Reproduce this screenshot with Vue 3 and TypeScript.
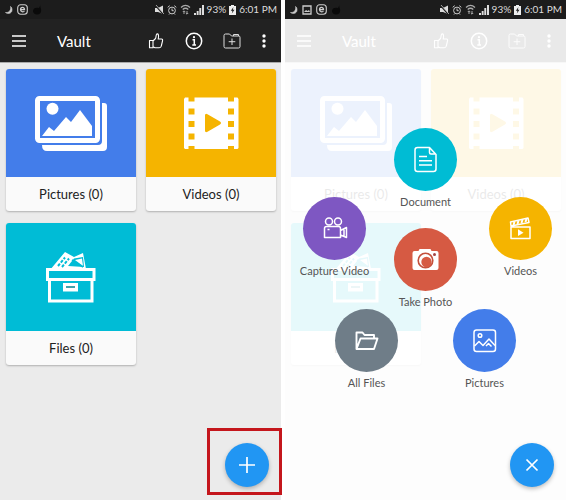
<script setup lang="ts">
type CardIcon = 'pictures' | 'videos' | 'files'
type ActionIcon = 'document' | 'capture' | 'clapper' | 'camera' | 'folder' | 'image'

interface Card {
  label: string
  count: number
  icon: CardIcon
}

interface Action {
  label: string
  icon: ActionIcon
  dx: number
  y: number
}

interface Screen {
  id: string
  menuOpen: boolean
}

const screens: Screen[] = [
  { id: 'home', menuOpen: false },
  { id: 'add', menuOpen: true },
]

const cards: Card[] = [
  { label: 'Pictures', count: 0, icon: 'pictures' },
  { label: 'Videos', count: 0, icon: 'videos' },
  { label: 'Files', count: 0, icon: 'files' },
]

// dx: distance of the circle's centre from the middle of the screen; y: from the overlay's top
const actions: Action[] = [
  { label: 'Document', icon: 'document', dx: 0, y: 140 },
  { label: 'Capture Video', icon: 'capture', dx: -91, y: 209 },
  { label: 'Videos', icon: 'clapper', dx: 95, y: 209 },
  { label: 'Take Photo', icon: 'camera', dx: 0, y: 240 },
  { label: 'All Files', icon: 'folder', dx: -59, y: 321 },
  { label: 'Pictures', icon: 'image', dx: 59, y: 321 },
]
</script>

<template>
  <main class="screens">
    <section v-for="screen in screens" :key="screen.id" class="phone">
      <div class="status">
        <div class="status-group notices">
          <svg width="9" height="10" viewBox="0 0 9 10"><path d="M6.5 1.5C7.5 5 5 8 1.5 7.5C4 9.5 8 8.500 8 5C8 3 7.5 2 6.5 1.5Z" fill="#ccc" stroke="#ccc" stroke-width=".6" /></svg>
          <svg v-if="screen.menuOpen" width="10" height="10" viewBox="0 0 10 10">
            <path d="M1 1H9V9H1Z" fill="none" stroke="#ccc" stroke-width="1.3" />
            <path d="M2 7L4 5L5.5 6L7 5L8 7Z" fill="#ccc" />
          </svg>
          <svg width="11" height="11" viewBox="0 0 11 11" fill="none" stroke="#ccc">
            <rect x=".7" y=".7" width="9.6" height="9.6" rx="3" stroke-width="1.1" />
            <path d="M3.5 5.6H7.5C7.5 2.5 3.5 2.5 3.5 5.6C3.5 8 6.5 8.3 7.4 7" stroke-width="1.3" />
          </svg>
          <svg width="11" height="13" viewBox="0 0 11 13"><path d="M9 1C7 4 10 5 9 9C7 13 1 12 1 8C1 5 4 4 7 5Z" fill="#0a0a0a" /></svg>
        </div>
        <div class="status-group">
          <svg width="9" height="10" viewBox="0 0 9 10">
            <path d="M0 3H3L8 .5V9L3 7H0Z" fill="#ddd" />
            <path d="M0 0L9 10" stroke="#1c1c1c" stroke-width="1.5" />
            <path d="M1 0L9 9" stroke="#ddd" stroke-width=".7" />
          </svg>
          <svg width="10" height="10" viewBox="0 0 10 10" fill="none" stroke="#ccc">
            <circle cx="5" cy="5.5" r="3.4" /><path d="M5 3.5V5.700H6.7M.7 2.3L2.7 .7M9.3 2.3L7.3 .7M2 9.5L3 8.5M8 9.5L7 8.5" />
          </svg>
          <svg width="11" height="11" viewBox="0 0 11 11" fill="none" stroke="#aaa">
            <path d="M1 3.5Q5.5 -.7 10 3.5M2.7 5.5Q5.5 3 8.3 5.5" stroke-width="1.3" />
            <path d="M4 10V7M7 10V7M2.8 8L4 6.8L5.2 8M5.8 9L7 10.2L8.2 9" />
          </svg>
          <svg width="10" height="10" viewBox="0 0 10 10" fill="#ddd">
            <path d="M0 10V8H2V10ZM2.7 10V6H4.6V10ZM5.3 10V3H7.2V10ZM8 10V0H10V10Z" />
          </svg>
          <span>93%</span>
          <svg width="7" height="10" viewBox="0 0 7 10">
            <path d="M2 0H5V1H7V10H0V1H2Z" fill="#eee" /><path d="M4.5 2L1.8 5.7H3.5L2.8 8.5L5.5 4.7H3.8Z" fill="#1c1c1c" />
          </svg>
          <span>6:01 PM</span>
        </div>
      </div>

      <div class="body">
        <div class="app" :inert="screen.menuOpen">
          <header class="toolbar">
            <button class="icon-button" aria-label="Menu">
              <svg width="16" height="16" viewBox="0 0 16 16"><path d="M1 3H15M1 8H15M1 13H15" stroke="#fff" stroke-width="1.7" /></svg>
            </button>
            <h1>Vault</h1>
            <div class="tools">
              <button class="icon-button" aria-label="Like">
                <svg width="18" height="18" viewBox="0 0 18 18" fill="none" stroke="#fff" stroke-width="1.1" stroke-linejoin="round">
                  <path d="M2.5 8.5H6V15.7H2.500ZM6 9L8.5 6.5C9.3 5 8.8 3 9.700 2C11.5 1.5 12 3.5 11.2 7H14.5Q16 7.2 15.5 9L14.3 14Q14 15.7 12.3 15.7H8L6 14.8" />
                </svg>
              </button>
              <button class="icon-button" aria-label="Information">
                <svg width="18" height="18" viewBox="0 0 18 18">
                  <circle cx="9" cy="9" r="7.7" fill="none" stroke="#fff" stroke-width="1.5" />
                  <circle cx="9" cy="5.2" r="1.1" fill="#fff" /><path d="M7.5 7.7H9.3V12.7M7.3 13H11" fill="none" stroke="#fff" stroke-width="1.5" />
                </svg>
              </button>
              <button class="icon-button" aria-label="New folder">
                <svg width="18" height="18" viewBox="0 0 18 18" fill="none" stroke="#ddd" stroke-width="1">
                  <path d="M1 14.5V3.5Q1 2 2.5 2H6.5L8.5 4H16Q17 4 17 5.5V14.5Q17 16 15.5 16H2.5Q1 16 1 14.5ZM10.5 4V2.5H15.5V4M9 6.5V13M5.7 9.7H12.3" />
                </svg>
              </button>
              <button class="icon-button" aria-label="More">
                <svg width="6" height="18" viewBox="0 0 6 18" fill="#fff"><circle cx="3" cy="4" r="1.7" /><circle cx="3" cy="9" r="1.7" /><circle cx="3" cy="14" r="1.7" /></svg>
              </button>
            </div>
          </header>

          <div class="cards">
            <button v-for="card in cards" :key="card.label" class="card">
              <span class="cover" :class="card.icon">
                <svg v-if="card.icon === 'pictures'" width="74" height="58" viewBox="34 94 74 58">
                  <rect x="37.5" y="98.5" width="60" height="42" rx="2" fill="none" stroke="#fff" stroke-width="5" />
                  <circle cx="52.5" cy="108.7" r="6" fill="#fff" />
                  <path d="M42 136L49 127L54 131L66 117L71 122L80 110L92 126V136Z" fill="#fff" />
                  <path d="M102 103H104Q107 103 107 106V147Q107 151 103 151H47Q42 151 42 145H98Q102 145 102 141Z" fill="#fff" />
                </svg>
                <svg v-else-if="card.icon === 'videos'" width="56" height="54" viewBox="183 96 56 54">
                  <path fill="#fff" fill-rule="evenodd" d="M185 97.5H188.5V101.5H194.5V97.5H228V101.5H234V97.5H237.5L238.5 99V148L237.5 149H234V146H228V149H194.5V146H188.5V149H185L184 148V99ZM188.5 108.5V114.5H194.5V108.5ZM188.5 121V127H194.5V121ZM188.5 133.5V139.5H194.5V133.5ZM228 108.5V114.5H234V108.5ZM228 121V127H234V121ZM228 133.5V139.5H234V133.5ZM205 115.5V130.5Q205 133 207.5 131.8L220 124.5Q222 123 220 121.5L207.5 114.3Q205 113 205 115.5Z" />
                </svg>
                <svg v-else width="52" height="54" viewBox="45 250 52 54">
                  <path d="M50 270L65 252L74 257L83 253L86 269V270Z" fill="#fff" />
                  <path d="M68 266L74 258.500L83 257L84 267Z" fill="#00bcd6" />
                  <path d="M75 260L82 258.5L83 266Z" fill="#fff" />
                  <path d="M72 260L83 267" stroke="#00bcd6" stroke-width="1.5" />
                  <path d="M58 266L65 257.500M62 267L69 258.5" stroke="#00bcd6" stroke-width="2" stroke-dasharray="3 1.5" />
                  <rect x="47.5" y="269.5" width="46.5" height="10" fill="#00bcd6" stroke="#fff" stroke-width="3" />
                  <path d="M49.5 280V301H92V280" fill="none" stroke="#fff" stroke-width="3" />
                  <path d="M63 283H78V291.5H63Z" fill="#fff" /><path d="M66 287H75" stroke="#00838f" stroke-width="1.5" />
                </svg>
              </span>
              <span class="card-label">{{ card.label }} ({{ card.count }})</span>
            </button>
          </div>
        </div>

        <nav v-if="screen.menuOpen" class="overlay" aria-label="Add">
          <button
            v-for="action in actions"
            :key="action.label"
            class="action"
            :style="{ left: `calc(50% + ${action.dx}px)`, top: `${action.y}px` }"
          >
            <span class="disc" :class="action.icon">
              <svg width="33" height="33" viewBox="-16.5 -16.5 33 33" fill="none" stroke="#fff" stroke-width="1.5" stroke-linejoin="round">
                <template v-if="action.icon === 'document'">
                  <path d="M-8 -12H4L10.5 -5V9.5Q10.5 12 8 12H-8Q-10.5 12 -10.5 9.5V-9.5Q-10.5 -12 -8 -12ZM4 -12V-7Q4 -5.5 5.5 -5.5H10.5" />
                  <path d="M-6.5 -3H1.5M-6.5 1.2H6.5M-6.5 5.5H6.5" />
                </template>
                <template v-else-if="action.icon === 'capture'">
                  <circle cx="-5.5" cy="-7" r="3.5" /><circle cx="3.5" cy="-7" r="3.5" />
                  <path d="M-10 0Q-10 -2 -8 -2H4Q6 -2 6 0V2L12 -1V9L6 6.5V9H-10ZM6 2V6.5M9.5 .5V8M-7 1H-5" />
                </template>
                <template v-else-if="action.icon === 'clapper'">
                  <path d="M-9.5 -1.5H9.5V10H-9.5ZM-9.5 -2.5L-10 -6.5L7.5 -10.5L8.5 -6Z" />
                  <path d="M-6 -7L-7 -3.5M-2 -8L-3 -4.5M2 -9L1 -5.5M6 -10L5 -6.5" stroke-width="2" />
                  <path d="M-2.5 .8V7.5L3 4.2Z" fill="#fff" stroke="none" />
                </template>
                <template v-else-if="action.icon === 'camera'">
                  <path d="M-11 -8.5H-7L-6 -10.5H5L6 -8.5H11Q13 -8.5 13 -6.5V8.5Q13 10.5 11 10.5H-11Q-13 10.5 -13 8.5V-6.5Q-13 -8.5 -11 -8.5Z" fill="#fff" stroke="none" />
                  <circle cx="0" cy="1" r="7.3" stroke="#c4503c" stroke-width="1.6" />
                  <circle cx="1" cy="2.5" r="5.2" fill="#d65a43" stroke="none" />
                  <circle cx="9" cy="-5" r="1.5" fill="#a34444" stroke="none" />
                </template>
                <template v-else-if="action.icon === 'folder'">
                  <path d="M-10 8.5V-8H-4L-2 -5.5H7.5V-2M-10 8.5L-6 -2H11L7.5 8.5Z" stroke-width="1.9" />
                </template>
                <template v-else>
                  <rect x="-10.5" y="-10.5" width="21.5" height="21.5" rx="2.5" />
                  <circle cx="-4.5" cy="-5" r="1.8" />
                  <path d="M-10 5.5L-5.5 1L-1.5 5L4.5 -1.5L10.5 5M1.5 5.5L4 3L7 6" />
                </template>
              </svg>
            </span>
            <span class="action-label">{{ action.label }}</span>
          </button>
        </nav>

        <div class="fab-area">
          <span v-if="!screen.menuOpen" class="highlight"></span>
          <button class="fab" :aria-label="screen.menuOpen ? 'Close' : 'Add'">
            <svg width="18" height="18" viewBox="0 0 18 18" fill="none" stroke="#fff" stroke-width="1.7">
              <path :d="screen.menuOpen ? 'M3.5 3.5L14.5 14.5M14.5 3.5L3.5 14.5' : 'M9 1V17M1 9H17'" />
            </svg>
          </button>
        </div>
      </div>
    </section>
  </main>
</template>

<style>
body {
  background: #fff;
}
</style>

<style scoped>
.screens {
  display: grid;
  grid-template-columns: 1fr 1fr;
  gap: 4px;
  padding-right: 1px;
  min-height: 100vh;
  box-sizing: border-box;
  font-family: Lato, "Open Sans", sans-serif;
  color: #222;
}

.phone {
  display: flex;
  flex-direction: column;
  min-width: 0;
}

.status {
  display: flex;
  justify-content: space-between;
  align-items: center;
  height: 19px;
  padding: 0 4px;
  background: #1c1c1c;
  color: #ddd;
  font-size: 10px;
  line-height: 19px;
  white-space: nowrap;
}

.status-group {
  display: flex;
  align-items: center;
  gap: 3px;
}

.notices {
  gap: 4px;
}

.body {
  position: relative;
  display: flex;
  flex: 1;
}

.app {
  flex: 1;
  min-width: 0;
  background: #ebebeb;
}

button {
  padding: 0;
  border: 0;
  background: none;
  color: inherit;
  font: inherit;
  cursor: pointer;
}

svg {
  display: block;
  flex: none;
}

.toolbar {
  display: flex;
  align-items: center;
  height: 43px;
  padding: 0 14px 0 11px;
  background: #222;
  color: #fff;
  border-bottom: 1px solid #aaa;
}

h1 {
  margin: 0 0 0 30px;
  font-size: 15px;
  font-weight: 400;
  line-height: 20px;
}

.tools {
  display: flex;
  gap: 20px;
  margin-left: auto;
}

.cards {
  display: grid;
  grid-template-columns: 1fr 1fr;
  gap: 12px 10px;
  padding: 6px 5px 6px 6px;
}

.card {
  display: flex;
  flex-direction: column;
  overflow: hidden;
  border-radius: 3px;
  background: #fafafa;
  box-shadow: 0 1px 2px rgba(0, 0, 0, 0.25);
}

.cover {
  display: flex;
  align-items: center;
  justify-content: center;
  align-self: stretch;
  height: 108px;
}

.pictures {
  background: #437dea;
}

.videos {
  background: #f5b400;
}

.files {
  background: #00bcd6;
}

.card-label {
  align-self: stretch;
  font-size: 13px;
  line-height: 34px;
  text-align: center;
}

.overlay {
  position: absolute;
  inset: 0;
  background: rgba(255, 255, 255, 0.9);
}

.action {
  position: absolute;
  display: flex;
  flex-direction: column;
  align-items: center;
  gap: 3px;
  width: 90px;
  margin: -31px 0 0 -45px;
}

.disc {
  display: flex;
  align-items: center;
  justify-content: center;
  width: 63px;
  height: 63px;
  border-radius: 50%;
}

.document {
  background: #00bcd4;
}

.capture {
  background: #7e57c2;
}

.clapper {
  background: #f5b400;
}

.camera {
  background: #d65a43;
}

.folder {
  background: #6f7d88;
}

.image {
  background: #437dea;
}

.action-label {
  font-size: 11px;
  line-height: 16px;
  white-space: nowrap;
  color: #555;
}

.fab-area {
  position: absolute;
  right: 12px;
  bottom: 13px;
}

.fab {
  display: flex;
  align-items: center;
  justify-content: center;
  width: 44px;
  height: 44px;
  border-radius: 50%;
  background: #2196f3;
  box-shadow: 0 2px 4px rgba(0, 0, 0, 0.25);
}

.highlight {
  position: absolute;
  inset: -15px -13px -8px -18px;
  border: 3px solid #c4161c;
  pointer-events: none;
}
</style>
